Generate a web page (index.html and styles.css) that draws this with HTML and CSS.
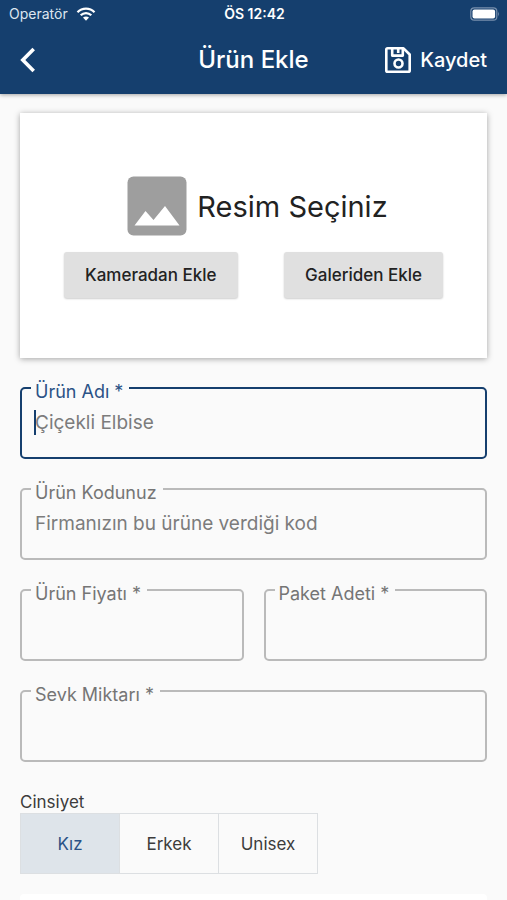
FILE: index.html
```html
<!DOCTYPE html>
<html lang="tr">
<head>
<meta charset="utf-8">
<meta name="viewport" content="width=device-width, initial-scale=1">
<title>Ürün Ekle</title>
<link rel="stylesheet" href="styles.css">
</head>
<body>
<header class="header">
  <div class="status">
    <div class="carrier">
      <span>Operatör</span>
      <svg width="20" height="14" viewBox="0 0 20 14" fill="none" stroke="#fff" stroke-width="2.3" aria-hidden="true">
        <path d="M1.500 5.200C6.200.4 13.800.4 18.500 5.200"/>
        <path d="M4.700 8.300C7.700 5.300 12.300 5.300 15.300 8.300"/>
        <path d="M10 13.700 7 10.600C8.700 9 11.300 9 13 10.600Z" fill="#fff" stroke="none"/>
      </svg>
    </div>
    <span class="time">ÖS 12:42</span>
    <svg class="battery" width="30" height="14" viewBox="0 0 30 14" aria-hidden="true">
      <rect x=".8" y=".8" width="26" height="12.400" rx="3.500" fill="none" stroke="#7890ad" stroke-width="1.200"/>
      <rect x="2.500" y="2.400" width="22.600" height="9.200" rx="2" fill="#fff"/>
      <path d="M28.200 4.600Q30 7 28.200 9.400Z" fill="#7890ad"/>
    </svg>
  </div>
  <div class="toolbar">
    <button class="back" type="button" aria-label="Geri">
      <svg width="16" height="26" viewBox="0 0 16 26" fill="none" stroke="#fff" stroke-width="3.600" aria-hidden="true"><path d="M13.700 2 2.800 13 13.700 24"/></svg>
    </button>
    <h1 class="title">Ürün Ekle</h1>
    <button class="save" type="submit" form="product">
      <svg width="28" height="28" viewBox="0 0 28 28" fill="none" stroke="#fff" stroke-width="2.600" stroke-linejoin="round" aria-hidden="true">
        <path d="M3.600 2.300H19.500L25.700 8.500V24.400Q25.700 25.700 24.400 25.700H3.600Q2.300 25.700 2.300 24.400V3.600Q2.300 2.300 3.600 2.300Z"/>
        <path d="M8.200 2.600V9.600H18.800V2.600M14.200 3V7"/>
        <circle cx="14.500" cy="17.500" r="4"/>
      </svg>
      <span>Kaydet</span>
    </button>
  </div>
</header>
<main class="content">
  <section class="picker">
    <div class="prompt">
      <svg width="60" height="60" viewBox="0 0 60 60" aria-hidden="true">
        <rect x=".5" y=".5" width="59" height="59" rx="6" fill="#9e9e9e"/>
        <path d="M7.500 49.500 18.500 35 26.500 44 38 30 52.500 49.500Z" fill="#fff"/>
      </svg>
      <span>Resim Seçiniz</span>
    </div>
    <div class="sources">
      <button type="button">Kameradan Ekle</button>
      <button type="button">Galeriden Ekle</button>
    </div>
  </section>
  <form class="form" id="product">
    <fieldset class="field active">
      <legend><label for="name">Ürün Adı *</label></legend>
      <input id="name" type="text" placeholder="Çiçekli Elbise">
    </fieldset>
    <fieldset class="field">
      <legend><label for="code">Ürün Kodunuz</label></legend>
      <input id="code" type="text" placeholder="Firmanızın bu ürüne verdiği kod">
    </fieldset>
    <div class="pair">
      <fieldset class="field">
        <legend><label for="price">Ürün Fiyatı *</label></legend>
        <input id="price" type="text">
      </fieldset>
      <fieldset class="field">
        <legend><label for="pack">Paket Adeti *</label></legend>
        <input id="pack" type="text">
      </fieldset>
    </div>
    <fieldset class="field">
      <legend><label for="amount">Sevk Miktarı *</label></legend>
      <input id="amount" type="text">
    </fieldset>
  </form>
  <section class="gender">
    <h2 id="gender">Cinsiyet</h2>
    <div class="toggles" role="group" aria-labelledby="gender">
      <button type="button" aria-pressed="true">Kız</button>
      <button type="button" aria-pressed="false">Erkek</button>
      <button type="button" aria-pressed="false">Unisex</button>
    </div>
  </section>
  <section class="next"></section>
</main>
</body>
</html>
```
FILE: styles.css
```css
* { box-sizing: border-box; }

body {
  margin: 0;
  min-height: 100vh;
  display: flex;
  flex-direction: column;
  background: #fafafa;
  color: #222;
  font-family: Inter, "Liberation Sans", sans-serif;
  font-size: 18px;
}

button, input { font: inherit; color: inherit; }
button { border: 0; padding: 0; background: none; cursor: pointer; }
h1, h2 { margin: 0; }
svg { display: block; flex: none; }

.header {
  background: #153f6e;
  color: #fff;
  padding-bottom: 6px;
  box-shadow: 0 1px 4px rgba(0, 0, 0, .35);
}

.status, .toolbar {
  display: grid;
  grid-template-columns: 1fr auto 1fr;
  align-items: center;
}

.status {
  height: 28px;
  padding: 0 7px 1px 9px;
  font-size: 14px;
}
.carrier { display: flex; align-items: center; gap: 8px; color: #dde6f0; }
.time { font-weight: 600; }
.battery { justify-self: end; }

.toolbar { height: 60px; padding: 4px 20px 0; }
.back { justify-self: start; }
.title { font-size: 24px; font-weight: 500; line-height: 32px; }
.save {
  justify-self: end;
  display: flex;
  align-items: center;
  gap: 8px;
  font-size: 20px;
  font-weight: 500;
}

.content {
  flex: 1;
  display: flex;
  flex-direction: column;
  padding: 19px 20px 0;
}

.picker {
  display: flex;
  flex-direction: column;
  gap: 16px;
  padding: 63px 44px 60px;
  background: #fff;
  box-shadow: 0 1px 6px rgba(0, 0, 0, .35);
}
.prompt {
  display: flex;
  align-items: center;
  justify-content: center;
  gap: 10px;
  padding-left: 8px;
  font-size: 29px;
}
.sources { display: flex; justify-content: space-between; }
.sources button {
  height: 46px;
  padding: 0 21px;
  border-radius: 3px;
  background: #e0e0e0;
  box-shadow: 0 1px 2px rgba(0, 0, 0, .2);
  font-size: 17px;
  font-weight: 500;
}

.form { display: grid; gap: 16px; margin-top: 16px; }
.pair { display: grid; grid-template-columns: 1fr 1fr; gap: 20px; }

.field {
  position: relative;
  min-width: 0;
  height: 85px;
  margin: 0;
  padding: 0 9px;
  border: 2px solid #bababa;
  border-radius: 5px;
  color: #757575;
}
.field legend { padding: 8px 6px 0 4px; line-height: 20px; }
.field input {
  display: block;
  width: 100%;
  height: 40px;
  padding: 0 4px;
  border: 0;
  outline: 0;
  background: transparent;
  color: #222;
  font-size: 19px;
}
.field input::placeholder { color: #7c7c7c; opacity: 1; }
.active { border-color: #153f6e; }
.active legend { color: #2b5286; }
.active::after {
  content: "";
  position: absolute;
  left: 12px;
  top: 8px;
  width: 2px;
  height: 25px;
  background: #153f6e;
}

.gender { margin-top: 30px; }
.gender h2 { color: #3c3c3c; font-size: 17px; font-weight: 400; line-height: 21px; }
.toggles { display: flex; }
.toggles button {
  width: 100px;
  height: 61px;
  margin-right: -1px;
  border: 1px solid #dcdfe2;
  font-size: 17px;
  color: #3c3c3c;
}
.toggles [aria-pressed="true"] { background: #dee4ea; color: #2b5286; }

.next {
  flex: 1;
  margin-top: 20px;
  border-radius: 4px 4px 0 0;
  background: #fff;
}
```
